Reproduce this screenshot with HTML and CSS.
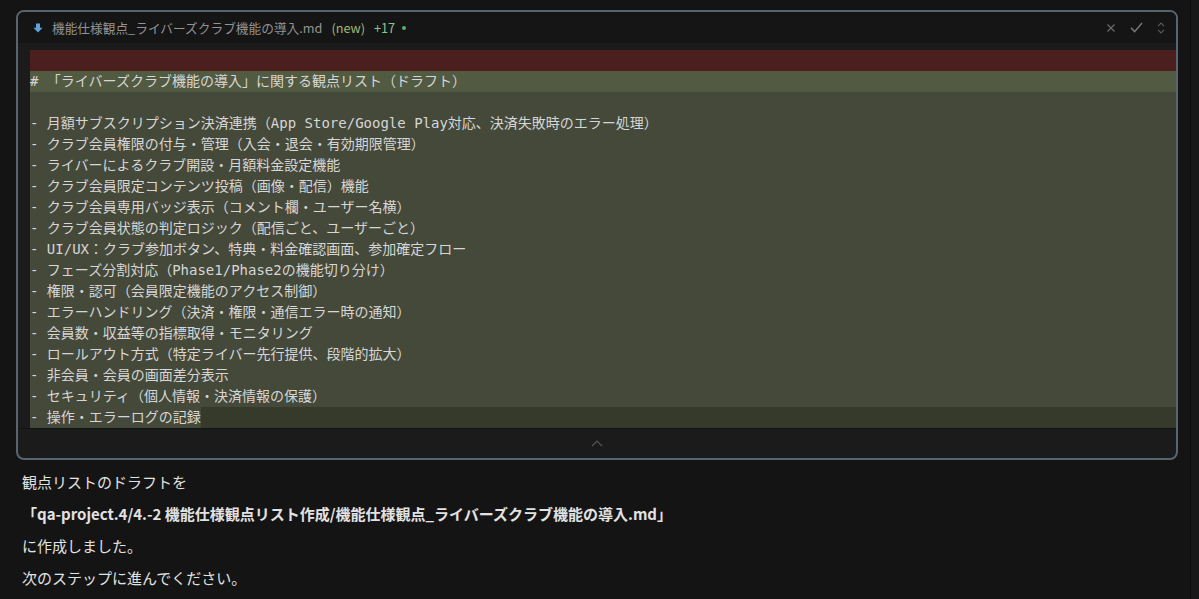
FILE: index.html
```html
<!DOCTYPE html>
<html lang="ja">
<head>
<meta charset="utf-8">
<title>観点リスト</title>
<link rel="stylesheet" href="styles.css">
</head>
<body>
<div class="app">
  <main class="main">
    <section class="card">
      <header class="card-head">
        <svg class="file-icon" width="10" height="10" viewBox="0 0 10 10"><path d="M3 0.5h4v4.2h2.6L5 9.6 0.4 4.7H3z" fill="#5ea3dc"/></svg>
        <span class="fname">機能仕様観点_ライバーズクラブ機能の導入.md</span>
        <span class="tag-new">(new)</span>
        <span class="plus">+17</span>
        <span class="dot"></span>
        <div class="actions">
          <svg width="10" height="10" viewBox="0 0 10 10"><path d="M1.5 1.5l7 7M8.5 1.5l-7 7" stroke="#6a6a6a" stroke-width="1.2" fill="none"/></svg>
          <svg width="13" height="11" viewBox="0 0 13 11"><path d="M1 5.8l3.6 3.8L12 1" stroke="#7a7a7a" stroke-width="1.4" fill="none"/></svg>
          <svg width="8" height="12" viewBox="0 0 8 12"><path d="M1 4.2L4 1l3 3.2M1 7.8L4 11l3-3.2" stroke="#5a5a5a" stroke-width="1.1" fill="none"/></svg>
        </div>
      </header>
      <div class="code">
        <div class="line del"></div>
        <div class="line add hd"># 「ライバーズクラブ機能の導入」に関する観点リスト（ドラフト）</div>
        <div class="line add"></div>
        <div class="line add">- 月額サブスクリプション決済連携（App Store/Google Play対応、決済失敗時のエラー処理）</div>
        <div class="line add">- クラブ会員権限の付与・管理（入会・退会・有効期限管理）</div>
        <div class="line add">- ライバーによるクラブ開設・月額料金設定機能</div>
        <div class="line add">- クラブ会員限定コンテンツ投稿（画像・配信）機能</div>
        <div class="line add">- クラブ会員専用バッジ表示（コメント欄・ユーザー名横）</div>
        <div class="line add">- クラブ会員状態の判定ロジック（配信ごと、ユーザーごと）</div>
        <div class="line add">- UI/UX：クラブ参加ボタン、特典・料金確認画面、参加確定フロー</div>
        <div class="line add">- フェーズ分割対応（Phase1/Phase2の機能切り分け）</div>
        <div class="line add">- 権限・認可（会員限定機能のアクセス制御）</div>
        <div class="line add">- エラーハンドリング（決済・権限・通信エラー時の通知）</div>
        <div class="line add">- 会員数・収益等の指標取得・モニタリング</div>
        <div class="line add">- ロールアウト方式（特定ライバー先行提供、段階的拡大）</div>
        <div class="line add">- 非会員・会員の画面差分表示</div>
        <div class="line add">- セキュリティ（個人情報・決済情報の保護）</div>
        <div class="line last"><span class="hl">- 操作・エラーログの記録</span></div>
      </div>
      <footer class="card-foot">
        <svg width="12" height="7" viewBox="0 0 12 7"><path d="M1 6l5-5 5 5" stroke="#555" stroke-width="1.2" fill="none"/></svg>
      </footer>
    </section>
    <div class="msg">
      <p>観点リストのドラフトを</p>
      <p class="strong">「qa-project.4/4.-2 機能仕様観点リスト作成/機能仕様観点_ライバーズクラブ機能の導入.md」</p>
      <p>に作成しました。</p>
      <p>次のステップに進んでください。</p>
    </div>
  </main>
  <div class="rail"></div>
</div>
</body>
</html>
```

FILE: styles.css
```css
* { box-sizing: border-box; }
html, body { margin: 0; padding: 0; height: 100%; }
body {
  background: #141414;
  color: #dedede;
  font-family: "Noto Sans CJK JP", "Noto Sans", sans-serif;
  overflow: hidden;
}
.app {
  display: flex;
  height: 599px;
}
.main {
  width: 1190px;
  flex: none;
  padding: 10px 12px 0 16px;
}
.rail {
  flex: 1;
  background: #181818;
  border-left: 1px solid #0d0d0d;
}
.card {
  border: 2px solid #56656f;
  border-radius: 8px;
  overflow: hidden;
  background: #1b1b1b;
}
.card-head {
  height: 31px;
  display: flex;
  align-items: center;
  padding: 0 11px 0 15px;
  background: #151515;
  font-size: 12.7px;
}
.file-icon { flex: none; margin-right: 9px; }
.fname { color: #939393; }
.tag-new { color: #a3b872; margin-left: 9px; }
.plus { color: #8fc48a; margin-left: 9px; }
.dot {
  width: 4px; height: 4px; border-radius: 50%;
  background: #58b06a;
  margin-left: 7px;
}
.actions {
  margin-left: auto;
  display: flex;
  align-items: center;
  gap: 14px;
}
.code {
  padding: 7px 0 0 12px;
  font-family: "DejaVu Sans Mono", "Noto Sans CJK JP", monospace;
  font-size: 14px;
  line-height: 21px;
  color: #d6d6d6;
}
.line {
  height: 21px;
  white-space: pre;
}
.del { background: #4a1f1d; }
.add { background: #45493a; }
.hd { background: #525a41; }
.last { background: #363a2a; }
.hl { background: #45493a; display: inline-block; height: 21px; }
.card-foot {
  height: 30px;
  border-top: 1px solid #131313;
  display: flex;
  justify-content: center;
  align-items: center;
}
.msg {
  padding: 6px 0 0 6px;
  font-size: 15px;
  line-height: 32px;
  color: #e2e2e2;
}
.msg p { margin: 0; }
.msg .strong { font-weight: 700; }
```
